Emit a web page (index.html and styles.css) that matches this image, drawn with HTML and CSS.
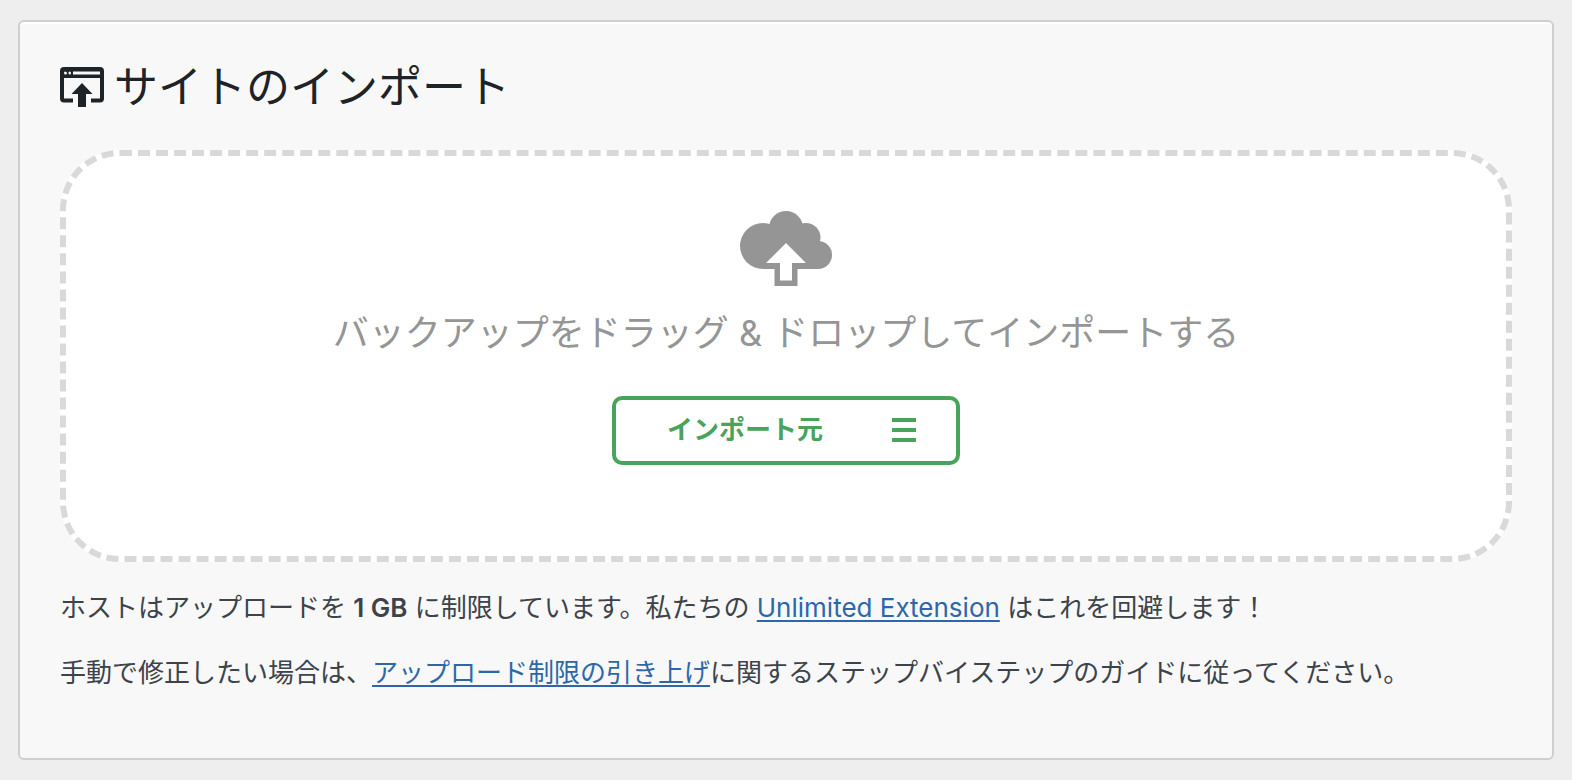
FILE: index.html
```html
<!DOCTYPE html>
<html lang="ja">
<head>
<meta charset="utf-8">
<meta name="viewport" content="width=device-width, initial-scale=1">
<title>サイトのインポート</title>
<link rel="stylesheet" href="styles.css">
</head>
<body>
<main class="panel">
  <h1 class="title">
    <svg class="title-icon" viewBox="0 0 44 40" aria-hidden="true">
      <path fill="currentColor" fill-rule="evenodd" d="M4 0H40Q44 0 44 4V31.500Q44 35.500 40 35.500H31V31.500H40V11H4V31.500H13V35.500H4Q0 35.500 0 31.500V4Q0 0 4 0ZM5 4.500Q4 4.500 4 6Q4 7.500 5.500 7.500Q7 7.500 7 6Q7 4.500 5 4.500ZM9.500 4.500Q8.500 4.500 8.500 6Q8.500 7.500 9.500 7.500Q11 7.500 11 6Q11 4.500 9.500 4.500ZM13 4.500V7.500H40V4.500Z"/>
      <path fill="currentColor" d="M22 16L32.500 27H26V40H18V27H11.500Z"/>
    </svg>
    <span>サイトのインポート</span>
  </h1>

  <section class="dropzone">
    <svg class="cloud" viewBox="0 0 92 76" aria-hidden="true">
      <g fill="#959595">
        <circle cx="23" cy="35" r="23"/>
        <circle cx="46" cy="17" r="17"/>
        <circle cx="66" cy="26.500" r="14.500"/>
        <circle cx="78" cy="44" r="14"/>
        <path d="M23 20H66L78 40V58H57.500V75H34.500V58H23Z"/>
      </g>
      <path fill="#fff" d="M46 32L66 52H52V69.500H40V52H26Z"/>
    </svg>
    <p class="drop-text">バックアップをドラッグ &amp; ドロップしてインポートする</p>
    <button class="import-button" type="button">
      <span>インポート元</span>
      <span class="bars" aria-hidden="true"><i></i><i></i><i></i></span>
    </button>
  </section>

  <p class="note">ホストはアップロードを <strong>1 GB</strong> に制限しています。私たちの <a href="#unlimited">Unlimited Extension</a> はこれを回避します！</p>
  <p class="note">手動で修正したい場合は、<a href="#guide">アップロード制限の引き上げ</a>に関するステップバイステップのガイドに従ってください。</p>
</main>
</body>
</html>
```
FILE: styles.css
```css
* {
  box-sizing: border-box;
}

body {
  margin: 0;
  padding: 20px 18px;
  background: #eee;
  color: #3c434a;
  font-family: Inter, "Noto Sans CJK JP", sans-serif;
  font-size: 26px;
  line-height: 40px;
}

.panel {
  padding: 39px 40px 65px;
  border: 2px solid #cfcfcf;
  border-radius: 6px;
  background: #f8f8f8;
  box-shadow: inset 0 2px 0 #fff;
}

.title {
  display: flex;
  align-items: center;
  gap: 10px;
  margin: 0 0 37px;
  color: #1d2327;
  font-size: 44px;
  font-weight: 400;
  line-height: 52px;
}

.title-icon {
  width: 44px;
  height: 40px;
}

.dropzone {
  display: flex;
  flex-direction: column;
  align-items: center;
  padding: 55px 24px 91px;
  border: 6px dashed #d9d9d9;
  border-radius: 60px;
  background: #fff;
}

.cloud {
  width: 92px;
  height: 76px;
}

.drop-text {
  margin: 21px 0 38px;
  color: #959595;
  font-size: 36px;
  line-height: 50px;
  text-align: center;
}

.import-button {
  display: flex;
  align-items: center;
  gap: 69px;
  padding: 10px 40px 11px 51px;
  border: 4px solid #4aa35a;
  border-radius: 10px;
  background: #fff;
  color: #4aa35a;
  font: inherit;
  font-weight: 700;
}

.bars {
  display: flex;
  flex-direction: column;
  gap: 6px;
  width: 24px;
}

.bars i {
  height: 4px;
  background: currentColor;
}

.note {
  margin: 25px 0 0;
}

.dropzone + .note {
  margin-top: 26px;
}

.note strong {
  font-weight: 600;
}

.note a {
  color: #2d67aa;
  text-decoration: underline;
  text-decoration-thickness: 2px;
  text-underline-offset: 3px;
}
```
